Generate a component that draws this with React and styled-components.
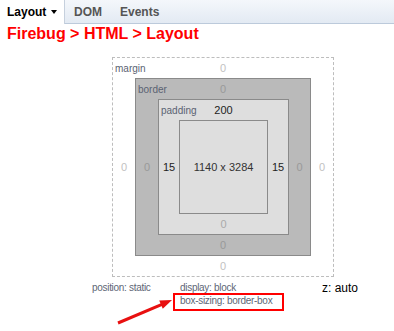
import React from 'react';
import styled, { createGlobalStyle } from 'styled-components';

const Global = createGlobalStyle`
  body {
    margin: 0;
    background: #fff;
    font-family: 'Liberation Sans', Arial, sans-serif;
  }
  #root {
    min-height: 100vh;
  }
`;

const TabBar = styled.div`
  display: flex;
  height: 23px;
  background: linear-gradient(#f4f7fb, #e3eaf3);
  border-bottom: 1px solid #bccadb;
`;

const Tab = styled.div`
  display: flex;
  align-items: center;
  padding: ${p => (p.$active ? '0 7px 0 7px' : '0 9px')};
  height: ${p => (p.$active ? '24px' : '23px')};
  width: ${p => (p.$active ? '50px' : 'auto')};
  margin-bottom: ${p => (p.$active ? '-1px' : '0')};
  background: ${p => (p.$active ? '#fff' : 'transparent')};
  border-right: ${p => (p.$active ? '1px solid #c6d0dd' : 'none')};
  font-size: 12px;
  font-weight: bold;
  color: ${p => (p.$active ? '#000' : '#555')};
`;

const Caret = styled.span`
  margin-left: 5px;
  border-top: 4px solid #000;
  border-left: 3.5px solid transparent;
  border-right: 3.5px solid transparent;
`;

const Title = styled.h1`
  margin: 1px 0 0;
  padding-left: 7px;
  font-size: 16px;
  line-height: 18px;
  font-weight: bold;
  color: #f00;
`;

const Panel = styled.div`
  margin-top: 14px;
  padding-left: 112px;
`;

const Layer = styled.div`
  display: grid;
  width: max-content;
  grid-template-columns: ${p => p.$left}px auto ${p => p.$right}px;
  grid-template-rows: 20px auto 20px;
  background: ${p => p.$bg};
  border: 1px ${p => (p.$dashed ? 'dashed #bdbdbd' : 'solid #8a8a8a')};
  font-size: 11px;
  color: ${p => p.$zero};
`;

const TopRow = styled.div`
  grid-column: 1 / -1;
  display: grid;
  grid-template-columns: 1fr auto 1fr;
  align-items: center;
`;

const Label = styled.span`
  padding-left: 2px;
  font-size: 10px;
  color: #5a6272;
`;

const Value = styled.span`
  display: flex;
  align-items: center;
  justify-content: center;
  color: ${p => p.$color || 'inherit'};
`;

const BottomRow = styled(Value)`
  grid-column: 1 / -1;
`;

const Content = styled.div`
  width: 89px;
  height: 94px;
  box-sizing: border-box;
  border: 1px solid #8a8a8a;
  background: #dedede;
  display: flex;
  align-items: center;
  justify-content: center;
  font-size: 11px;
  color: #333;
`;

const Info = styled.div`
  position: relative;
  margin-top: 4px;
  padding: 0 0 22px 92px;
  display: grid;
  grid-template-columns: 88px 142px auto;
  grid-template-rows: 14px 16px;
  font-size: 10px;
  letter-spacing: -0.3px;
  color: #5e6675;
  line-height: 14px;
`;

const ZIndex = styled.span`
  font-size: 12px;
  letter-spacing: 0;
  color: #000;
`;

const Highlight = styled.span`
  grid-column: 2;
  grid-row: 2;
  justify-self: start;
  margin: -2px 0 0 -7px;
  padding: 0 10px 0 5px;
  border: 2px solid #f00;
  line-height: 12px;
`;

const Arrow = styled.svg`
  position: absolute;
  left: 110px;
  top: 10px;
`;

function Box({ name, left, right, bg, zero, dashed, top, bottom, sideL, sideR, color, children }) {
  return (
    <Layer $left={left} $right={right} $bg={bg} $zero={zero} $dashed={dashed}>
      <TopRow>
        <Label>{name}</Label>
        <Value $color={color}>{top}</Value>
        <span />
      </TopRow>
      <Value $color={color}>{sideL}</Value>
      {children}
      <Value $color={color}>{sideR}</Value>
      <BottomRow>{bottom}</BottomRow>
    </Layer>
  );
}

export default function App() {
  return (
    <>
      <Global />
      <TabBar>
        <Tab $active>Layout<Caret /></Tab>
        <Tab>DOM</Tab>
        <Tab>Events</Tab>
      </TabBar>
      <Title>Firebug &gt; HTML &gt; Layout</Title>
      <Panel>
        <Box name="margin" left={22} right={22} bg="#fff" zero="#c2c2c2" dashed top="0" bottom="0" sideL="0" sideR="0">
          <Box name="border" left={22} right={21} bg="#bababa" zero="#999" top="0" bottom="0" sideL="0" sideR="0">
            <Box name="padding" left={20} right={20} bg="#dedede" zero="#aaa" color="#222" top="200" bottom="0" sideL="15" sideR="15">
              <Content>1140 x 3284</Content>
            </Box>
          </Box>
        </Box>
      </Panel>
      <Info>
        <span>position: static</span>
        <span>display: block</span>
        <ZIndex>z: auto</ZIndex>
        <Highlight>box-sizing: border-box</Highlight>
        <Arrow width="70" height="40" viewBox="0 0 70 40">
          <line x1="8" y1="32" x2="52" y2="13.3" stroke="#e81010" strokeWidth="3" />
          <polygon points="62,9 52.8,17.8 49.2,9.6" fill="#e81010" />
        </Arrow>
      </Info>
    </>
  );
}
